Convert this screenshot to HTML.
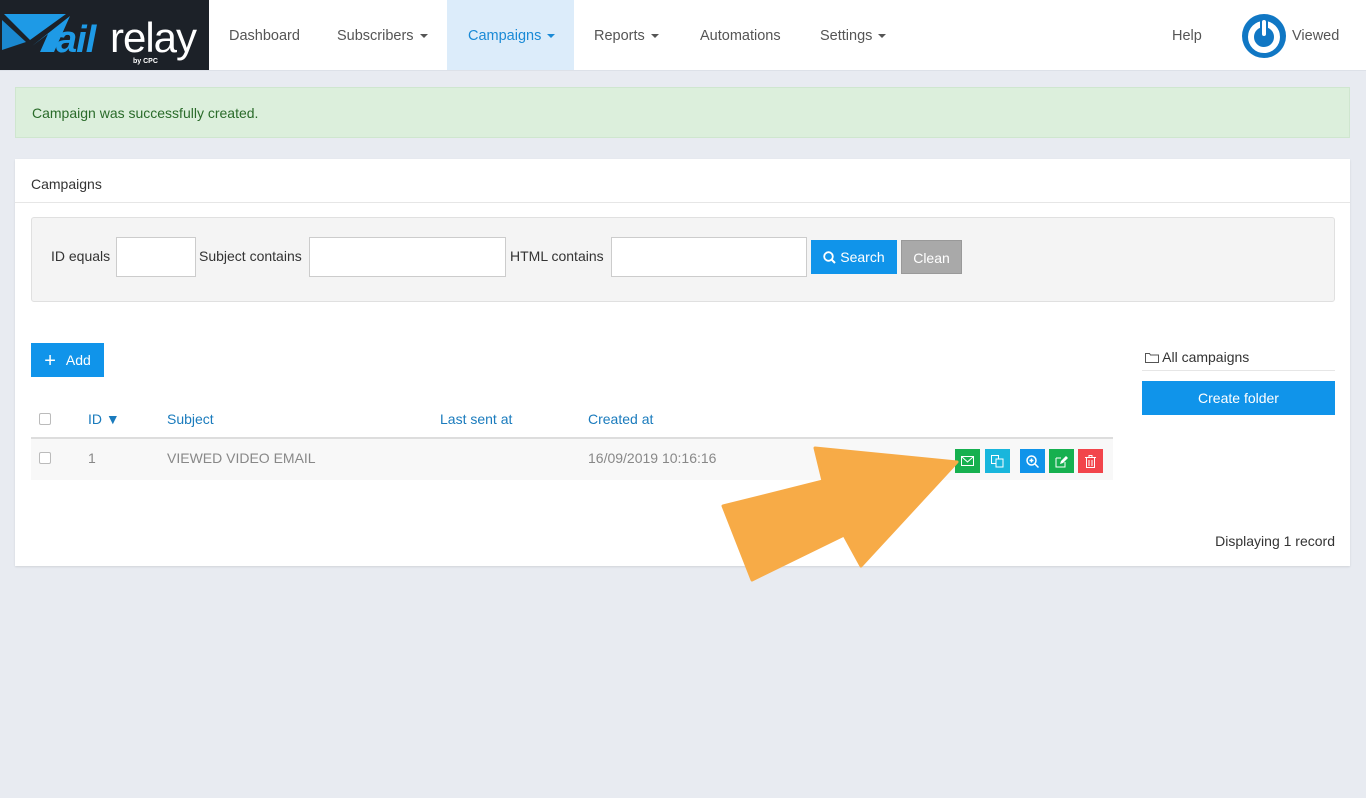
<!DOCTYPE html>
<html><head><meta charset="utf-8"><style>
*{box-sizing:border-box;margin:0;padding:0}
body{width:1366px;height:798px;background:#e8ebf1;font-family:"Liberation Sans",sans-serif;font-size:14px;color:#333;position:relative;overflow:hidden}
.nav{position:absolute;left:0;top:0;width:1366px;height:71px;background:#fff;border-bottom:1px solid #dde1e8}
.logo{position:absolute;left:0;top:0;width:209px;height:70px;background:#1c2128}
.nav a{position:absolute;top:0;height:70px;line-height:72px;color:#555;font-size:14.5px}
.caret{display:inline-block;border-top:4px solid #555;border-left:4px solid transparent;border-right:4px solid transparent;vertical-align:middle;margin-left:6px}
.abs{position:absolute}
.alert{left:15px;top:87px;width:1335px;height:51px;background:#dcefdc;border:1px solid #cfe6cf;color:#2a6b2a;padding:17px 16px;font-size:14px}
.panel{left:15px;top:159px;width:1335px;height:407px;background:#fff;box-shadow:0 1px 2px rgba(0,0,0,.1)}
.inp{position:absolute;top:237px;height:40px;background:#fff;border:1px solid #ccc}
.lbl{position:absolute;top:248px;font-size:14px}
.btn{position:absolute;color:#fff;text-align:center;font-size:14px}
.th{position:absolute;top:411px;color:#1a7bbd;font-size:14px}
.ab{position:absolute;top:449px;width:25px;height:24px;display:flex;align-items:center;justify-content:center}
</style></head><body>
<div class="nav">
 <div class="logo">
  <svg width="209" height="70" viewBox="0 0 209 70">
   <polygon points="4,14 66,14 30,40" fill="#1e9ae6"/>
   <polygon points="2,20 26,42 2,50" fill="#1a88d0"/>
   <polygon points="70,16 54,52 40,52 48,34 32,46" fill="#1e9ae6"/>
   <text x="56" y="52" font-family="Liberation Sans" font-style="italic" font-weight="bold" font-size="38" fill="#1e9ae6" letter-spacing="-1">ail</text>
   <text x="110" y="52" font-family="Liberation Sans" font-size="42" fill="#fff" letter-spacing="-1">relay</text>
   <text x="133" y="63" font-family="Liberation Sans" font-weight="bold" font-size="7" fill="#fff">by CPC</text>
  </svg>
 </div>
 <a style="left:229px">Dashboard</a>
 <a style="left:337px">Subscribers<span class="caret"></span></a>
 <a style="left:447px;width:127px;background:#dcecfa;color:#1a8ad6;padding-left:21px">Campaigns<span class="caret" style="border-top-color:#1a8ad6"></span></a>
 <a style="left:594px">Reports<span class="caret"></span></a>
 <a style="left:700px">Automations</a>
 <a style="left:820px">Settings<span class="caret"></span></a>
 <a style="left:1172px">Help</a>
 <svg class="abs" style="left:1241px;top:13px" width="46" height="46" viewBox="0 0 46 46"><circle cx="23" cy="23" r="22" fill="#1077c4"/><circle cx="23" cy="24" r="13" fill="none" stroke="#fff" stroke-width="6"/><rect x="20" y="6" width="6" height="18" rx="3" fill="#fff" stroke="#1077c4" stroke-width="2"/></svg>
 <a style="left:1292px">Viewed</a>
</div>
<div class="abs alert">Campaign was successfully created.</div>
<div class="abs panel"></div>
<div class="abs" style="left:31px;top:176px;font-size:14px">Campaigns</div>
<div class="abs" style="left:15px;top:202px;width:1335px;height:1px;background:#e6e6e6"></div>
<div class="abs" style="left:31px;top:217px;width:1304px;height:85px;background:#f4f4f4;border:1px solid #e0e0e0;border-radius:3px"></div>
<div class="lbl" style="left:51px">ID equals</div>
<div class="inp" style="left:116px;width:80px"></div>
<div class="lbl" style="left:199px">Subject contains</div>
<div class="inp" style="left:309px;width:197px"></div>
<div class="lbl" style="left:510px">HTML contains</div>
<div class="inp" style="left:611px;width:196px"></div>
<div class="btn" style="left:811px;top:240px;width:86px;height:34px;line-height:34px;background:#1094ea"><svg width="13" height="13" style="vertical-align:-2px"><circle cx="5.5" cy="5.5" r="4.3" fill="none" stroke="#fff" stroke-width="1.8"/><path d="M8.5 8.5l3.5 3.5" stroke="#fff" stroke-width="2"/></svg> Search</div>
<div class="btn" style="left:901px;top:240px;width:61px;height:34px;line-height:34px;background:#a9a9a9;border:1px solid #999">Clean</div>
<div class="btn" style="left:31px;top:343px;width:73px;height:34px;line-height:34px;background:#1094ea"><span style="font-size:20px;vertical-align:-2px;margin-right:10px">+</span>Add</div>
<div class="abs" style="left:1145px;top:349px;font-size:14px"><svg width="14" height="11" style="vertical-align:-1px"><path d="M.5 1.5h4l1 1.5h8v7.5H.5z" fill="none" stroke="#555"/></svg> All campaigns</div>
<div class="abs" style="left:1142px;top:370px;width:193px;height:1px;background:#e6e6e6"></div>
<div class="btn" style="left:1142px;top:381px;width:193px;height:34px;line-height:34px;background:#1094ea">Create folder</div>
<div class="abs" style="left:39px;top:413px;width:12px;height:12px;border:1px solid #bbb;border-radius:2px;background:#fff"></div>
<div class="th" style="left:88px">ID ▼</div>
<div class="th" style="left:167px">Subject</div>
<div class="th" style="left:440px">Last sent at</div>
<div class="th" style="left:588px">Created at</div>
<div class="abs" style="left:31px;top:437px;width:1082px;height:2px;background:#ddd"></div>
<div class="abs" style="left:31px;top:439px;width:1082px;height:41px;background:#f8f8f8"></div>
<div class="abs" style="left:39px;top:452px;width:12px;height:12px;border:1px solid #bbb;border-radius:2px;background:#fff"></div>
<div class="abs" style="left:88px;top:450px;color:#888">1</div>
<div class="abs" style="left:167px;top:450px;color:#888">VIEWED VIDEO EMAIL</div>
<div class="abs" style="left:588px;top:450px;color:#888">16/09/2019 10:16:16</div>
<div class="ab" style="left:955px;background:#16b04f"><svg width="13" height="10"><rect x=".5" y=".5" width="12" height="9" fill="none" stroke="#fff"/><path d="M1 1l5.5 5 5.5-5" fill="none" stroke="#fff"/></svg></div>
<div class="ab" style="left:985px;background:#19b6dc"><svg width="13" height="13"><rect x=".5" y=".5" width="7" height="8" fill="none" stroke="#fff"/><rect x="5" y="4" width="7" height="8" fill="#19b6dc" stroke="#fff"/></svg></div>
<div class="ab" style="left:1020px;background:#1094ea"><svg width="13" height="13"><circle cx="5.5" cy="5.5" r="4.5" fill="none" stroke="#fff" stroke-width="1.5"/><path d="M8.5 8.5l4 4M3.5 5.5h4M5.5 3.5v4" stroke="#fff" stroke-width="1.5"/></svg></div>
<div class="ab" style="left:1049px;background:#16b04f"><svg width="13" height="13"><path d="M1 3h5M1 3v9h9V7" fill="none" stroke="#fff"/><path d="M5 9l1-3 5-5 2 2-5 5z" fill="#fff"/></svg></div>
<div class="ab" style="left:1078px;background:#f2454b"><svg width="11" height="13"><path d="M0 2.5h11M4 2V.5h3V2M1.5 3v9.5h8V3M4 5v6M7 5v6" fill="none" stroke="#fff"/></svg></div>
<div class="abs" style="right:31px;top:533px;font-size:14px">Displaying 1 record</div>
<svg class="abs" style="left:0;top:0" width="1366" height="798"><polygon points="957,462 861,566 844,535 752,580 723,506 823,481 815,448" fill="#f7ab47" stroke="#f7ab47" stroke-width="3" stroke-linejoin="round"/></svg>
</body></html>
